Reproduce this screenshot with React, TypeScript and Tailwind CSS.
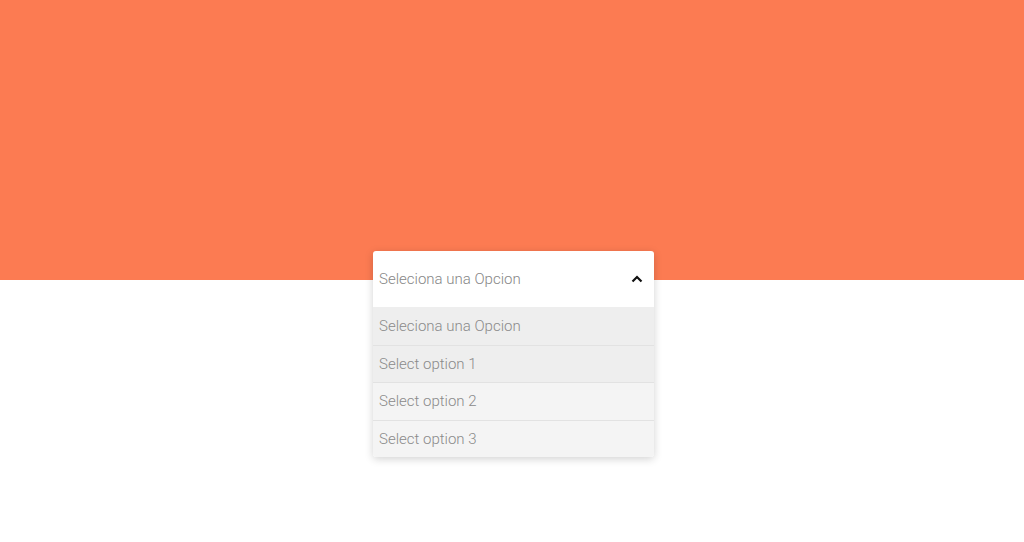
import React, { useState } from "react";

const options = ["Seleciona una Opcion", "Select option 1", "Select option 2", "Select option 3"];

export default function App() {
  const [open, setOpen] = useState(true);
  const [hovered] = useState(1);

  return (
    <div className="min-h-[542px] w-full bg-white font-['Roboto',sans-serif] font-light">
      <div className="h-[280px] bg-[#fc7b52]" />
      <div className="flex justify-center -mt-[29px] pl-[3px]">
        <div className="w-[281px] rounded-[3px] bg-white shadow-[0_2px_8px_rgba(0,0,0,0.18)]">
          <button
            onClick={() => setOpen(!open)}
            className="flex h-[56px] w-full items-center justify-between pl-[6px] pr-[10px] text-[15px] text-[#868686]"
          >
            <span>Seleciona una Opcion</span>
            <svg width="12" height="8" viewBox="0 0 12 8" className="mr-[1px]">
              <path d="M1.5 6.5 L6 2 L10.5 6.5" fill="none" stroke="#111" strokeWidth="2.2" />
            </svg>
          </button>
          {open && (
            <ul className="overflow-hidden rounded-b-[3px]">
              {options.map((opt, i) => (
                <li
                  key={opt}
                  className={`flex h-[37.5px] items-center pl-[6px] text-[15px] text-[#8a8a8a] ${
                    i > 0 ? "border-t border-[#e2e2e2]" : ""
                  } ${i <= hovered ? "bg-[#eeeeee]" : "bg-[#f4f4f4]"}`}
                >
                  {opt}
                </li>
              ))}
            </ul>
          )}
        </div>
      </div>
    </div>
  );
}
